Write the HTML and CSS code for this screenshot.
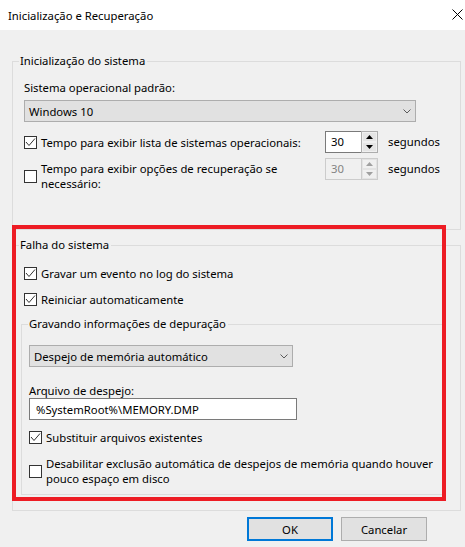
FILE: index.html
```html
<!DOCTYPE html>
<html lang="pt-BR">
<head>
  <meta charset="UTF-8">
  <meta name="viewport" content="width=device-width, initial-scale=1.0"/>
  <title>Inicialização e Recuperação</title>
  <link rel="stylesheet" href="styles.css">
</head>
<body>
<div class="window">

  <div class="titlebar">
    <span class="title">Inicialização e Recuperação</span>
    <svg class="close" width="11" height="11" viewBox="0 0 11 11">
      <path d="M0.5 0.5L10.5 10.5M10.5 0.5L0.5 10.5" stroke="#000" stroke-width="1" fill="none"/>
    </svg>
  </div>

  <div class="main">

    <!-- Inicializacao do sistema -->
    <fieldset class="group startup">
      <legend>Inicialização do sistema</legend>
      <div class="label first">Sistema operacional padrão:</div>
      <div class="combo os">
        <span>Windows 10</span>
        <svg class="chevron" width="8" height="5" viewBox="0 0 8 5"><path d="M0.5 0.5L4 4L7.5 0.5" stroke="#5a5a5a" fill="none"/></svg>
      </div>

      <div class="timerow row1">
        <div class="check">
          <span class="box"><svg width="11" height="11" viewBox="0 0 11 11"><path d="M1 5L4 8.5L10 1.5" stroke="#333" fill="none"/></svg></span>
          <span>Tempo para exibir lista de sistemas operacionais:</span>
        </div>
        <div class="spin">
          <div class="spin-edit">30</div>
          <div class="spin-btns">
            <div class="spin-btn"><svg width="7" height="4" viewBox="0 0 7 4"><path d="M0 4L3.5 0L7 4Z" fill="#000"/></svg></div>
            <div class="spin-btn"><svg width="7" height="4" viewBox="0 0 7 4"><path d="M0 0L3.5 4L7 0Z" fill="#000"/></svg></div>
          </div>
        </div>
        <span class="unit">segundos</span>
      </div>

      <div class="timerow row2">
        <div class="check two">
          <span class="box"></span>
          <span>Tempo para exibir opções de recuperação se<br>necessário:</span>
        </div>
        <div class="spin disabled">
          <div class="spin-edit">30</div>
          <div class="spin-btns">
            <div class="spin-btn"><svg width="7" height="4" viewBox="0 0 7 4"><path d="M0 4L3.5 0L7 4Z" fill="#a0a0a0"/></svg></div>
            <div class="spin-btn"><svg width="7" height="4" viewBox="0 0 7 4"><path d="M0 0L3.5 4L7 0Z" fill="#a0a0a0"/></svg></div>
          </div>
        </div>
        <span class="unit">segundos</span>
      </div>
    </fieldset>

    <!-- Falha do sistema -->
    <fieldset class="group failure">
      <legend>Falha do sistema</legend>
      <div class="check log">
        <span class="box"><svg width="11" height="11" viewBox="0 0 11 11"><path d="M1 5L4 8.5L10 1.5" stroke="#333" fill="none"/></svg></span>
        <span>Gravar um evento no log do sistema</span>
      </div>
      <div class="check restart">
        <span class="box"><svg width="11" height="11" viewBox="0 0 11 11"><path d="M1 5L4 8.5L10 1.5" stroke="#333" fill="none"/></svg></span>
        <span>Reiniciar automaticamente</span>
      </div>

      <fieldset class="group debug">
        <legend>Gravando informações de depuração</legend>
        <div class="combo dump">
          <span>Despejo de memória automático</span>
          <svg class="chevron" width="8" height="5" viewBox="0 0 8 5"><path d="M0.5 0.5L4 4L7.5 0.5" stroke="#5a5a5a" fill="none"/></svg>
        </div>
        <div class="label file">Arquivo de despejo:</div>
        <div class="textbox">%SystemRoot%\MEMORY.DMP</div>
        <div class="check overwrite">
          <span class="box"><svg width="11" height="11" viewBox="0 0 11 11"><path d="M1 5L4 8.5L10 1.5" stroke="#333" fill="none"/></svg></span>
          <span>Substituir arquivos existentes</span>
        </div>
        <div class="check lowdisk">
          <span class="box"></span>
          <span>Desabilitar exclusão automática de despejos de memória quando houver<br>pouco espaço em disco</span>
        </div>
      </fieldset>
    </fieldset>

    <div class="buttons">
      <button class="btn default">OK</button>
      <button class="btn">Cancelar</button>
    </div>
  </div>

  <!-- marcacao vermelha -->
  <div class="highlight"></div>
</div>
</body>
</html>
```

FILE: styles.css
```css
html, body {
	margin: 0;
	padding: 0;
}

body {
	background: #f0f0f0;
	font-family: "Noto Sans", "Open Sans", sans-serif;
	font-size: 11.3px;
	line-height: 15px;
	color: #000;
}

.window {
	position: relative;
	width: 465px;
	height: 547px;
	overflow: hidden;
}

.titlebar {
	height: 30px;
	background: #fff;
	display: flex;
	align-items: center;
	justify-content: space-between;
	padding: 0 2px 0 8px;
	box-sizing: border-box;
}

.close {
	margin-top: -1px;
}

.main {
	padding: 23px 4px 0 12px;
}

/* group boxes */
.group {
	border: 1px solid #dcdcdc;
	margin: 0;
	padding: 0 11px;
	min-width: 0;
}

.group legend {
	padding: 0 2px 0 1px;
	margin-left: -5px;
	line-height: 16px;
}

.startup {
	padding-bottom: 38px;
}

.failure {
	margin-top: 7px;
	padding-bottom: 15px;
}

.debug {
	margin: 9px 5px 0 -3px;
	padding: 0 7px 8px 7px;
}

.debug legend {
	margin-left: -1px;
}

.label.first {
	margin-top: 11px;
}

.label.file {
	margin-top: 16px;
}

/* combo boxes */
.combo {
	height: 22px;
	box-sizing: border-box;
	background: #e1e1e1;
	border: 1px solid #adadad;
	display: flex;
	align-items: center;
	justify-content: space-between;
	padding: 0 4px 0 4px;
}

.combo .chevron {
	margin-right: 0;
}

.combo.os {
	margin-top: 5px;
	width: 392px;
}

.combo.dump {
	margin-top: 13px;
	width: 264px;
}

.textbox {
	width: 268px;
	height: 22px;
	box-sizing: border-box;
	background: #fff;
	border: 1px solid #7a7a7a;
	padding: 2px 6px 0;
	line-height: 17px;
}

/* checkboxes */
.check {
	display: flex;
	align-items: center;
}

.check .box {
	width: 13px;
	height: 13px;
	box-sizing: border-box;
	border: 1px solid #333;
	background: #fff;
	flex: none;
	margin-right: 4px;
}

.check .box svg {
	display: block;
}

.check.log {
	margin-top: 13px;
}

.check.restart {
	margin-top: 11px;
}

.check.overwrite {
	margin-top: 10px;
}

.check.lowdisk {
	margin-top: 11px;
}

/* time rows */
.timerow {
	display: flex;
	align-items: flex-start;
}

.timerow .check {
	width: 301px;
	height: 22px;
}

.timerow .check.two {
	height: auto;
	margin-top: 3px;
}

.timerow.row1 {
	margin-top: 9px;
}

.timerow.row2 {
	margin-top: 5px;
}

.unit {
	margin-left: 10px;
	line-height: 22px;
}

.spin {
	display: flex;
	width: 53px;
	height: 22px;
}

.spin-edit {
	width: 36px;
	box-sizing: border-box;
	border: 1px solid #7a7a7a;
	border-right: none;
	background: #fff;
	padding-left: 5px;
	line-height: 19px;
}

.spin-btns {
	width: 17px;
	box-sizing: border-box;
	border: 1px solid #adadad;
	display: flex;
	flex-direction: column;
	background: #f0f0f0;
}

.spin-btn {
	flex: 1;
	display: flex;
	align-items: center;
	justify-content: center;
	background: #e5e5e5;
	border: 1px solid #f0f0f0;
}

.spin.disabled .spin-edit {
	background: #f0f0f0;
	border-color: #cccccc;
	color: #838383;
}

.spin.disabled .spin-btns {
	border-color: #cccccc;
}

.spin.disabled .spin-btn {
	background: #f0f0f0;
	border-color: #e3e3e3;
}

/* buttons */
.buttons {
	display: flex;
	justify-content: flex-end;
	gap: 8px;
	margin-top: 6px;
	padding-right: 34px;
}

.btn {
	width: 86px;
	height: 24px;
	background: #e1e1e1;
	border: 1px solid #adadad;
	font-family: inherit;
	font-size: inherit;
	color: #000;
	padding: 0;
}

.btn.default {
	border: 2px solid #0078d7;
}

/* red box drawn over the screenshot */
.highlight {
	position: absolute;
	left: 12px;
	top: 225px;
	width: 434px;
	height: 276px;
	box-sizing: border-box;
	border: 4px solid #ed1c24;
}
```
